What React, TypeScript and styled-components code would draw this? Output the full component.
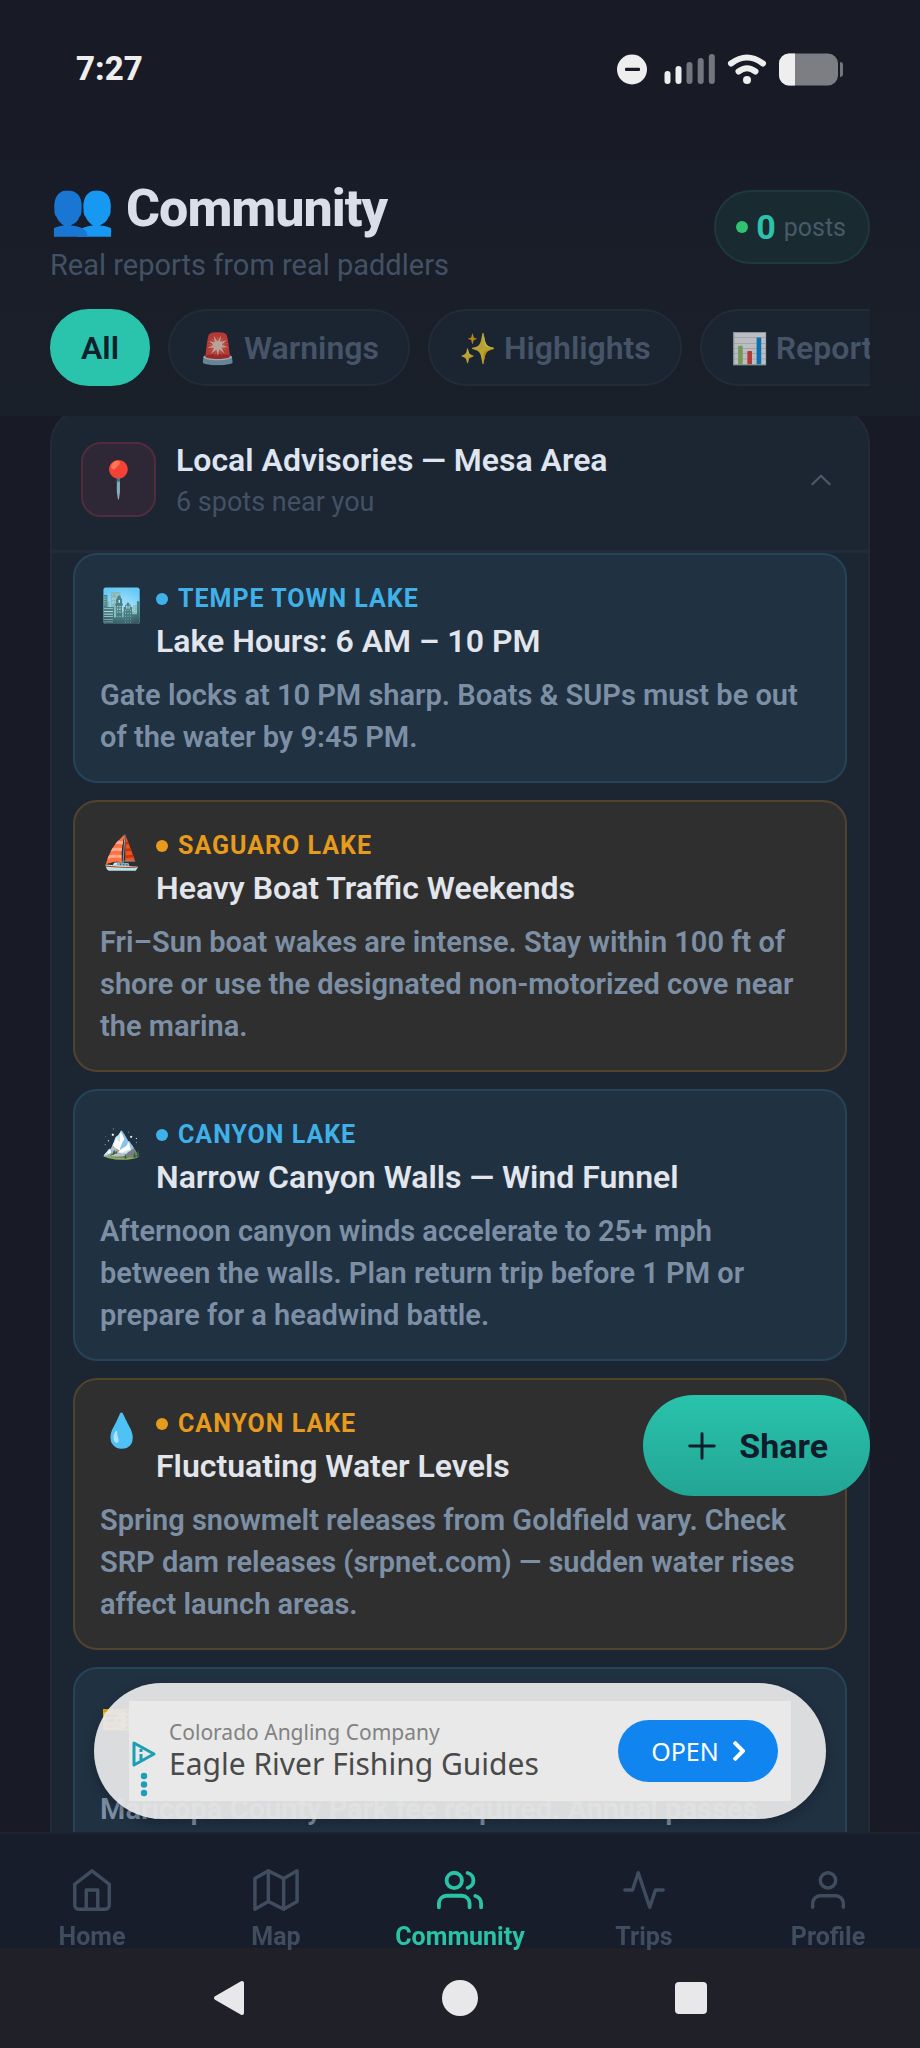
import React from 'react';
import styled, { createGlobalStyle } from 'styled-components';

const Global = createGlobalStyle`
  * { box-sizing: border-box; }
  body { margin: 0; background: #181a26; color: #dfe5ee; font-family: Roboto, "Noto Sans", sans-serif; }
  button { font: inherit; border: 0; cursor: pointer; }
  h1, h2, h3, p { margin: 0; }
`;

const Screen = styled.div`
  display: flex;
  flex-direction: column;
  height: 100vh;
  overflow: hidden;
`;

const StatusBar = styled.div`
  display: flex;
  align-items: center;
  justify-content: space-between;
  flex: none;
  height: 160px;
  padding: 0 76px 24px;
  font-size: 33px;
  font-weight: 800;
  color: #eeeeee;
`;

const StatusIcons = styled.svg`
  width: 228px;
  height: 36px;
`;

const Header = styled.header`
  flex: none;
  padding: 18px 50px 30px;
  background: linear-gradient(#181c28, #1a202a);
`;

const HeaderTop = styled.div`
  display: flex;
  align-items: flex-start;
  justify-content: space-between;
`;

const Title = styled.h1`
  display: flex;
  align-items: center;
  gap: 12px;
  font-size: 52px;
  line-height: 62px;
  font-weight: 800;
  letter-spacing: -1px;
  color: #d9dfe9;
`;

const Subtitle = styled.p`
  margin-top: 8px;
  font-size: 29px;
  line-height: 34px;
  color: #435164;
`;

const Count = styled.div`
  display: flex;
  align-items: center;
  gap: 8px;
  height: 74px;
  margin-top: 12px;
  padding: 0 22px 0 20px;
  border: 2px solid #1d393d;
  border-radius: 37px;
  background: #1a2a31;
  font-size: 25px;
  color: #485a68;
  strong { font-size: 34px; color: #2cc2aa; }
`;

const Dot = styled.span<{ $tone: string }>`
  width: 12px;
  height: 12px;
  border-radius: 50%;
  background: ${(p) => p.$tone};
`;

const Chips = styled.div`
  display: flex;
  gap: 18px;
  margin-top: 27px;
  overflow: hidden;
`;

const Chip = styled.button<{ $active?: boolean }>`
  flex: none;
  height: 77px;
  padding: 0 29px;
  border: 2px solid ${(p) => (p.$active ? '#2ac3ac' : '#222b38')};
  border-radius: 39px;
  background: ${(p) => (p.$active ? '#2ac3ac' : '#1b2431')};
  color: ${(p) => (p.$active ? '#10202c' : '#465468')};
  font-size: 32px;
  font-weight: 600;
  white-space: nowrap;
  span { font-size: 30px; opacity: 0.7; }
`;

const Feed = styled.main`
  flex: 1;
  min-height: 0;
  overflow: hidden;
  padding: 0 50px;
`;

const Panel = styled.section`
  margin-top: -8px;
  border: 2px solid #222b39;
  border-radius: 36px 36px 0 0;
  background: #1c2532;
`;

const PanelHead = styled.button`
  display: flex;
  align-items: center;
  width: 100%;
  gap: 20px;
  padding: 32px 34px 33px 29px;
  border-bottom: 3px solid #222b39;
  background: none;
  color: inherit;
  text-align: left;
`;

const PinBox = styled.span`
  display: grid;
  place-items: center;
  width: 75px;
  height: 75px;
  border: 2px solid #512c3c;
  border-radius: 20px;
  background: #2e2735;
  font-size: 36px;
`;

const HeadText = styled.span`
  flex: 1;
  display: flex;
  flex-direction: column;
  gap: 9px;
`;

const HeadTitle = styled.span`
  font-size: 32px;
  line-height: 36px;
  font-weight: 600;
  color: #dfe5f0;
`;

const HeadNote = styled.span`
  font-size: 27px;
  line-height: 30px;
  color: #435164;
`;

const CardList = styled.div`
  display: flex;
  flex-direction: column;
  gap: 17px;
  padding: 0 21px;
`;

const Card = styled.article<{ $warn?: boolean }>`
  padding: 25px 24px 23px 25px;
  border: 2px solid ${(p) => (p.$warn ? '#52432f' : '#264459')};
  border-radius: 24px;
  background: ${(p) => (p.$warn ? '#2f2f2f' : '#203142')};
  color: ${(p) => (p.$warn ? '#e79b1c' : '#40b1e8')};
`;

const CardTop = styled.div`
  display: flex;
  gap: 14px;
  min-height: 84px;
`;

const Emoji = styled.span`
  width: 42px;
  padding-top: 6px;
  font-size: 33px;
  line-height: 40px;
  text-align: center;
`;

const Place = styled.div`
  display: flex;
  align-items: center;
  gap: 10px;
  font-size: 25px;
  line-height: 38px;
  font-weight: 700;
  letter-spacing: 1px;
  text-transform: uppercase;
`;

const CardTitle = styled.h3`
  font-size: 32px;
  line-height: 46px;
  font-weight: 600;
  color: #e2e6ec;
`;

const CardBody = styled.p`
  margin-top: 10px;
  font-size: 29px;
  line-height: 42px;
  font-weight: 600;
  color: #7d8fa5;
`;

const ShareButton = styled.button`
  position: fixed;
  right: 50px;
  bottom: 552px;
  display: flex;
  align-items: center;
  gap: 16px;
  height: 101px;
  padding: 0 42px 0 38px;
  border-radius: 51px;
  background: linear-gradient(#29c3ac, #22a594);
  color: #101c2b;
  font-size: 34px;
  font-weight: 700;
`;

const Ad = styled.aside`
  position: fixed;
  left: 94px;
  right: 94px;
  bottom: 229px;
  height: 136px;
  padding: 18px 35px;
  border-radius: 68px;
  background: rgba(230, 230, 230, 0.95);
  box-shadow: 0 4px 12px rgba(0, 0, 0, 0.25);
`;

const AdInner = styled.div`
  display: flex;
  align-items: center;
  gap: 12px;
  height: 100px;
  padding-right: 13px;
  background: #e9e9e9;
  font-family: "Noto Sans", sans-serif;
`;

const AdMark = styled.svg`
  width: 26px;
  height: 58px;
  margin: 36px 0 0 2px;
`;

const AdText = styled.div`
  flex: 1;
  padding-bottom: 4px;
`;

const AdBrand = styled.div`
  font-size: 21px;
  line-height: 30px;
  color: #828282;
`;

const AdTitle = styled.div`
  font-size: 30px;
  line-height: 34px;
  color: #4a4a4a;
`;

const AdButton = styled.button`
  display: flex;
  align-items: center;
  justify-content: center;
  gap: 14px;
  width: 160px;
  height: 62px;
  border-radius: 31px;
  background: #1185ef;
  color: #ffffff;
  font-size: 25px;
`;

const Nav = styled.nav`
  position: relative;
  display: grid;
  grid-template-columns: repeat(5, 1fr);
  flex: none;
  height: 116px;
  border-top: 2px solid #1d242e;
  background: #171d2a;
`;

const NavLink = styled.a<{ $active?: boolean }>`
  display: flex;
  flex-direction: column;
  align-items: center;
  gap: 8px;
  padding-top: 33px;
  color: ${(p) => (p.$active ? '#2ac3a6' : '#3f4d5f')};
  font-size: 25px;
  line-height: 32px;
  font-weight: 700;
  text-decoration: none;
`;

const SystemBar = styled.div`
  display: flex;
  align-items: center;
  justify-content: space-around;
  flex: none;
  height: 100px;
  padding: 0 115px;
  background: #202128;
`;

const SystemButton = styled.button`
  display: grid;
  place-items: center;
  padding: 0;
  background: none;
`;

const Icon = ({ children, size = 46, width = 2 }: { children: React.ReactNode; size?: number; width?: number }) => (
  <svg width={size} height={size} viewBox="0 0 24 24" fill="none" stroke="currentColor" strokeWidth={width} strokeLinecap="round" strokeLinejoin="round" aria-hidden="true">
    {children}
  </svg>
);

type Advisory = { emoji: string; place?: string; title?: string; body: string; warn?: boolean };

const advisories: Advisory[] = [
  { emoji: '🏙️', place: 'Tempe Town Lake', title: 'Lake Hours: 6 AM – 10 PM', body: 'Gate locks at 10 PM sharp. Boats & SUPs must be out of the water by 9:45 PM.' },
  { emoji: '⛵', place: 'Saguaro Lake', title: 'Heavy Boat Traffic Weekends', body: 'Fri–Sun boat wakes are intense. Stay within 100 ft of shore or use the designated non-motorized cove near the marina.', warn: true },
  { emoji: '🏔️', place: 'Canyon Lake', title: 'Narrow Canyon Walls — Wind Funnel', body: 'Afternoon canyon winds accelerate to 25+ mph between the walls. Plan return trip before 1 PM or prepare for a headwind battle.' },
  { emoji: '💧', place: 'Canyon Lake', title: 'Fluctuating Water Levels', body: 'Spring snowmelt releases from Goldfield vary. Check SRP dam releases (srpnet.com) — sudden water rises affect launch areas.', warn: true },
  { emoji: '🎫', body: 'Maricopa County Park fee required. Annual passes' },
];

const tabs = [
  { label: 'Home', icon: <><path d="M3 9l9-7 9 7v11a2 2 0 0 1-2 2H5a2 2 0 0 1-2-2z" /><path d="M9 22V12h6v10" /></> },
  { label: 'Map', icon: <><path d="M1 6v16l7-4 8 4 7-4V2l-7 4-8-4-7 4z" /><path d="M8 2v16M16 6v16" /></> },
  { label: 'Community', icon: <><path d="M17 21v-2a4 4 0 0 0-4-4H5a4 4 0 0 0-4 4v2" /><circle cx="9" cy="7" r="4" /><path d="M23 21v-2a4 4 0 0 0-3-3.87M16 3.13a4 4 0 0 1 0 7.75" /></> },
  { label: 'Trips', icon: <path d="M22 12h-4l-3 9L9 3l-3 9H2" /> },
  { label: 'Profile', icon: <><path d="M20 21v-2a4 4 0 0 0-4-4H8a4 4 0 0 0-4 4v2" /><circle cx="12" cy="7" r="4" /></> },
];

export default function App() {
  return (
    <Screen>
      <Global />
      <StatusBar>
        <time>7:27</time>
        <StatusIcons viewBox="0 0 228 36" aria-hidden="true">
          <circle cx="16" cy="19.5" r="15" fill="#eee" />
          <rect x="9" y="17.8" width="15" height="3.2" rx="1" fill="#181a26" />
          <g fill="#eee">
            <rect x="48.5" y="21" width="6" height="13" rx="3" />
            <rect x="59.5" y="16" width="6" height="18" rx="3" />
          </g>
          <g fill="#74767d">
            <rect x="70.5" y="12" width="6" height="22" rx="3" />
            <rect x="81.7" y="8" width="6" height="26" rx="3" />
            <rect x="92.8" y="4" width="6" height="30" rx="3" />
          </g>
          <g fill="none" stroke="#eee" strokeWidth="6" strokeLinecap="round">
            <path d="M115 13.500Q131 1.500 147 13.500" />
            <path d="M122.500 21.500Q131 15 139.500 21.500" />
          </g>
          <circle cx="131" cy="30" r="4" fill="#eee" />
          <rect x="163" y="3.500" width="59" height="32" rx="10" fill="#7c7e84" />
          <path d="M179 3.500h-6a10 10 0 0 0-10 10v12a10 10 0 0 0 10 10h6z" fill="#eee" />
          <path d="M224 12a3 3 0 0 1 3 3v9a3 3 0 0 1-3 3z" fill="#74767d" />
        </StatusIcons>
      </StatusBar>
      <Header>
        <HeaderTop>
          <div>
            <Title><span>👥</span>Community</Title>
            <Subtitle>Real reports from real paddlers</Subtitle>
          </div>
          <Count><Dot $tone="#33c172" /><strong>0</strong> posts</Count>
        </HeaderTop>
        <Chips>
          <Chip $active>All</Chip>
          <Chip><span>🚨</span> Warnings</Chip>
          <Chip><span>✨</span> Highlights</Chip>
          <Chip><span>📊</span> Reports</Chip>
        </Chips>
      </Header>
      <Feed>
        <Panel>
          <PanelHead aria-expanded="true">
            <PinBox>📍</PinBox>
            <HeadText>
              <HeadTitle>Local Advisories — Mesa Area</HeadTitle>
              <HeadNote>6 spots near you</HeadNote>
            </HeadText>
            <Icon size={26}><path d="M4 16l8-8 8 8" stroke="#4a596b" /></Icon>
          </PanelHead>
          <CardList>
            {advisories.map((a) => (
              <Card key={a.body} $warn={a.warn}>
                <CardTop>
                  <Emoji>{a.emoji}</Emoji>
                  {a.place && (
                    <div>
                      <Place><Dot $tone="currentColor" />{a.place}</Place>
                      <CardTitle>{a.title}</CardTitle>
                    </div>
                  )}
                </CardTop>
                <CardBody>{a.body}</CardBody>
              </Card>
            ))}
          </CardList>
        </Panel>
      </Feed>
      <ShareButton><Icon size={42} width={1.7}><path d="M12 5v14M5 12h14" /></Icon>Share</ShareButton>
      <Ad>
        <AdInner>
          <AdMark viewBox="0 0 26 58" aria-hidden="true">
            <path d="M3 3v22l20-11z" fill="none" stroke="#1a9fb5" strokeWidth="3" strokeLinejoin="round" />
            <path d="M10 9v3M10 14v6" stroke="#1a9fb5" strokeWidth="3" />
            <g fill="#1a9fb5"><circle cx="13" cy="36" r="3.200" /><circle cx="13" cy="44.500" r="3.200" /><circle cx="13" cy="53" r="3.200" /></g>
          </AdMark>
          <AdText>
            <AdBrand>Colorado Angling Company</AdBrand>
            <AdTitle>Eagle River Fishing Guides</AdTitle>
          </AdText>
          <AdButton>OPEN <svg width="12" height="20" viewBox="0 0 12 20" fill="none" stroke="#fff" strokeWidth="4" aria-hidden="true"><path d="M1 1l9 9-9 9" /></svg></AdButton>
        </AdInner>
      </Ad>
      <Nav>
        {tabs.map((t) => (
          <NavLink key={t.label} href="#" $active={t.label === 'Community'}>
            <Icon width={t.label === 'Community' ? 2 : 1.8}>{t.icon}</Icon>{t.label}
          </NavLink>
        ))}
      </Nav>
      <SystemBar>
        <SystemButton aria-label="Back"><svg width="32" height="36" viewBox="0 0 32 36"><path d="M29 3v30L3 18z" fill="#e8e8ea" stroke="#e8e8ea" strokeWidth="4" strokeLinejoin="round" /></svg></SystemButton>
        <SystemButton aria-label="Home"><svg width="36" height="36" viewBox="0 0 36 36"><circle cx="18" cy="18" r="18" fill="#e8e8ea" /></svg></SystemButton>
        <SystemButton aria-label="Recents"><svg width="32" height="32" viewBox="0 0 32 32"><rect width="32" height="32" rx="4" fill="#e8e8ea" /></svg></SystemButton>
      </SystemBar>
    </Screen>
  );
}
